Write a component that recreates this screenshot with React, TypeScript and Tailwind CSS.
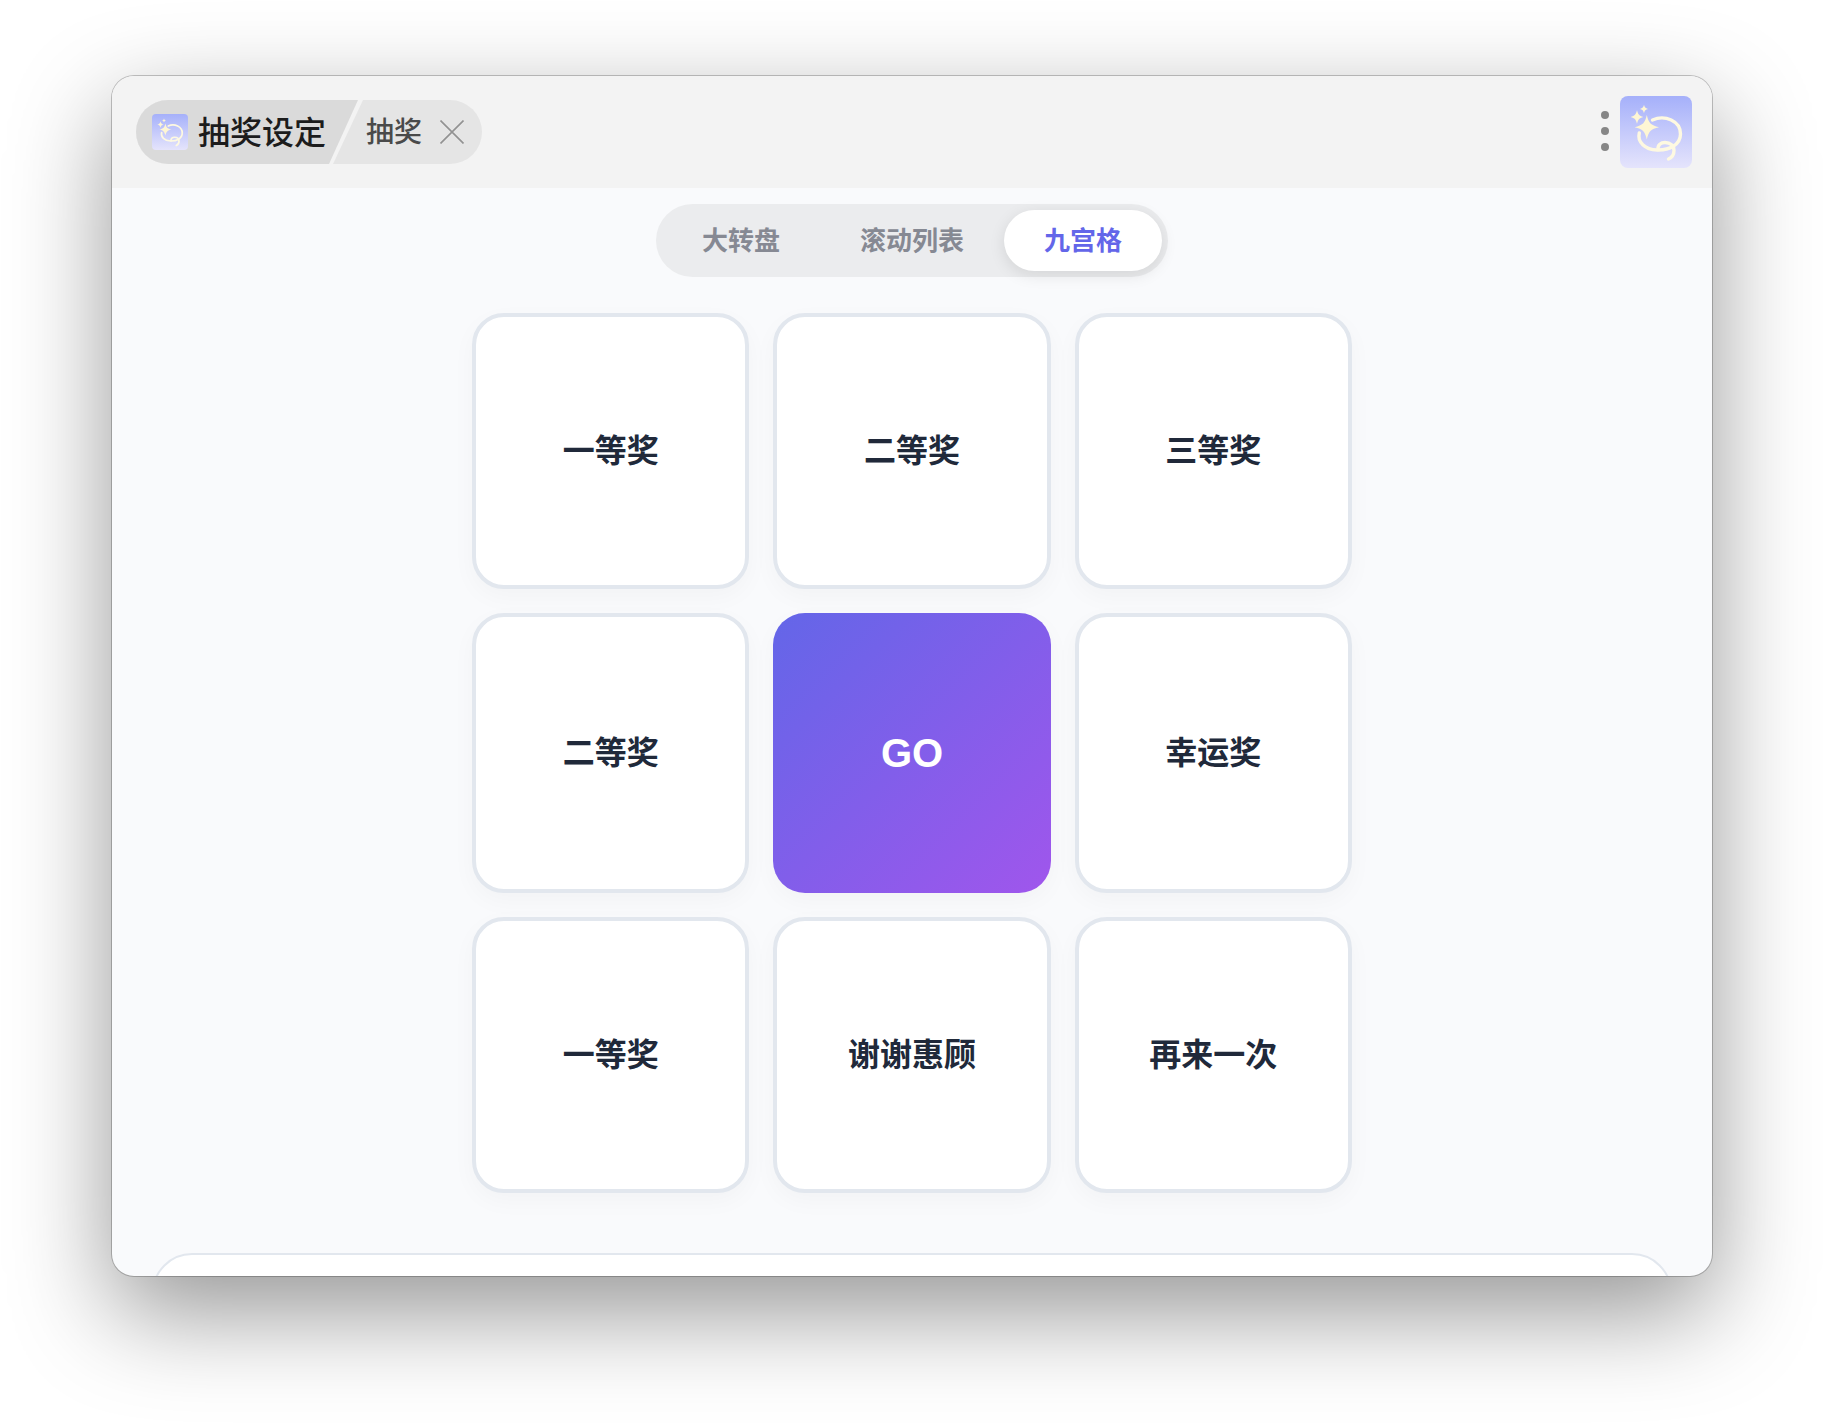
import clsx from 'clsx';

const modes = [
    { id: 'wheel', label: '大转盘' },
    { id: 'list', label: '滚动列表' },
    { id: 'grid', label: '九宫格' },
];

const prizes = ['一等奖', '二等奖', '三等奖', '二等奖', 'GO', '幸运奖', '一等奖', '谢谢惠顾', '再来一次'];

function AppLogo({ id, className }: { id: string; className: string }) {
    return (
        <svg viewBox="0 0 72 72" className={className} aria-hidden="true">
            <defs>
                <linearGradient id={id} x1="0" y1="0" x2="0" y2="1">
                    <stop offset="0" stopColor="#a5b0fa" />
                    <stop offset="1" stopColor="#e5e4fc" />
                </linearGradient>
            </defs>
            <rect width="72" height="72" rx="8" fill={`url(#${id})`} />
            <g fill="none" stroke="#fef9e1" strokeWidth="3.4" strokeLinecap="round">
                <path d="M32.5 24C45 18.500 60.500 25 60.500 38C60.500 49 49 54.500 37 54C25 53.500 17 46 19.300 37" />
                <path d="M38 53.500C37.500 49 41 46.500 45 46.500C50.500 46.500 54 50 54 54.500C54 58.500 52 61.500 48.500 63" />
            </g>
            <g fill="#fef6d4">
                <path d="M26.800 19C28.600 27 30.800 29.300 39 31.200C30.800 33.100 28.600 35.400 26.800 43.600C25 35.400 22.800 33.100 14.600 31.200C22.800 29.300 25 27 26.800 19Z" />
                <path d="M17 14.300C18.200 18.800 19.200 19.800 23.400 21C19.200 22.200 18.200 23.200 17 27.700C15.800 23.200 14.800 22.200 10.600 21C14.800 19.800 15.800 18.800 17 14.300Z" />
                <path d="M24 8.800C24.800 11.600 25.400 12.200 28.200 13C25.400 13.800 24.800 14.400 24 17.200C23.200 14.400 22.600 13.800 19.800 13C22.600 12.200 23.200 11.600 24 8.800Z" />
            </g>
        </svg>
    );
}

function TitleBar() {
    return (
        <header className="flex h-28 shrink-0 items-center justify-between bg-[#f3f3f3] pr-5 pl-6">
            <nav className="flex h-16 items-center overflow-hidden rounded-full bg-[#e5e5e5]">
                <div className="flex h-full w-[227px] items-center bg-[#f3f3f3] [clip-path:polygon(0_0,100%_0,197px_100%,0_100%)]">
                    <h1 className="flex h-full w-[222px] items-center gap-[10px] bg-[#dadada] pl-4 text-[32px] font-medium text-[#1c1c1c] [clip-path:polygon(0_0,100%_0,193px_100%,0_100%)]">
                        <AppLogo id="logo-small" className="size-9" />
                        <span className="pt-[2px]">抽奖设定</span>
                    </h1>
                </div>
                <span className="pt-[2px] pl-[3px] text-[28px] font-medium text-[#4a4a4a]">抽奖</span>
                <button type="button" aria-label="关闭" className="mr-4 ml-4 p-[2px] text-[#929292]">
                    <svg viewBox="0 0 24 24" className="size-6" fill="none" stroke="currentColor" strokeWidth="1.6">
                        <path d="M0.500 0.500L23.500 23.500M23.500 0.500L0.500 23.500" />
                    </svg>
                </button>
            </nav>
            <div className="flex items-center gap-[11px]">
                <button type="button" aria-label="更多" className="flex flex-col gap-2 pb-[2px]">
                    <span className="size-2 rounded-full bg-[#868686]" />
                    <span className="size-2 rounded-full bg-[#868686]" />
                    <span className="size-2 rounded-full bg-[#868686]" />
                </button>
                <AppLogo id="logo-large" className="size-[72px]" />
            </div>
        </header>
    );
}

function ModeTabs({ active }: { active: string }) {
    return (
        <div role="tablist" className="flex rounded-full bg-[#ebecee] p-[6px]">
            {modes.map((mode) => (
                <button
                    key={mode.id}
                    type="button"
                    role="tab"
                    aria-selected={mode.id === active}
                    className={clsx(
                        'h-[61px] rounded-full px-10 pt-[2px] text-[26px] font-bold',
                        mode.id === active
                            ? 'bg-white text-[#6366e9] shadow-[0_4px_16px_rgba(0,0,0,0.1)]'
                            : 'text-[#868993]'
                    )}
                >
                    {mode.label}
                </button>
            ))}
        </div>
    );
}

function PrizeGrid() {
    return (
        <div className="mt-9 grid w-full max-w-[880px] grid-cols-3 grid-rows-[276px_280px_276px] gap-6">
            {prizes.map((prize, index) =>
                prize === 'GO' ? (
                    <button
                        key={index}
                        type="button"
                        className="rounded-[32px] bg-[linear-gradient(135deg,#6366e8,#a056ec)] text-[40px] font-bold text-white shadow-[0_8px_24px_rgba(0,0,0,0.03)]"
                    >
                        {prize}
                    </button>
                ) : (
                    <div
                        key={index}
                        className="flex items-center justify-center rounded-[32px] border-4 border-[#e2e7ee] bg-white text-[32px] font-bold text-[#20293a] shadow-[0_8px_24px_rgba(0,0,0,0.03)]"
                    >
                        {prize}
                    </div>
                )
            )}
        </div>
    );
}

export default function App() {
    return (
        <div className="flex h-screen bg-white px-28 pt-[76px] pb-[148px] font-['Liberation_Sans','Noto_Sans_CJK_SC',sans-serif]">
            <div className="flex flex-1 flex-col overflow-hidden rounded-[22px] bg-[#f9fafc] shadow-[0_0_0_1px_rgba(0,0,0,0.22),0_36px_100px_rgba(0,0,0,0.42)]">
                <TitleBar />
                <main className="flex min-h-0 flex-1 flex-col items-center overflow-hidden px-10 pt-4">
                    <ModeTabs active="grid" />
                    <PrizeGrid />
                    <section className="mt-[60px] h-40 w-full shrink-0 rounded-[40px] border-2 border-[#e2e7ee] bg-white" />
                </main>
            </div>
        </div>
    );
}
